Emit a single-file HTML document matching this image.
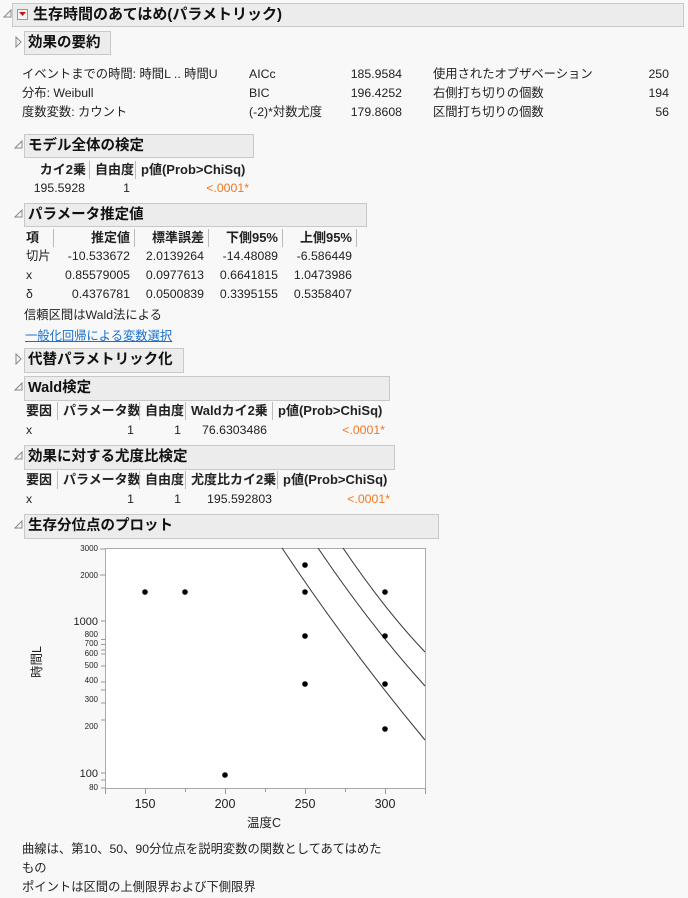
<!DOCTYPE html>
<html><head><meta charset="utf-8"><style>
body{margin:0;width:688px;height:898px;background:#f8f8f8;position:relative;overflow:hidden;font-family:"Liberation Sans","Noto Sans CJK JP",sans-serif;color:#222}
.t{position:absolute;white-space:nowrap;font-size:12.3px;line-height:14px}
.r{text-align:right}
.b{font-weight:bold;font-size:13px}
.o{color:#f07820}
.hd{position:absolute;background:#ececec;border:1px solid #c8c8c8;box-sizing:border-box;font-weight:bold;font-size:14.5px;line-height:22px;padding-left:3px;color:#111}
.sep{position:absolute;width:1px;background:#bbb}
</style></head><body>

<svg style="position:absolute;left:3px;top:9px" width="10" height="10"><path d="M8 1 L8 8 L1 8 Z" fill="none" stroke="#888" stroke-width="1"/></svg>
<div class="hd" style="left:12px;top:3px;width:672px;height:24px;font-size:15px;padding-left:20px">生存時間のあてはめ(パラメトリック)</div>
<div style="position:absolute;left:17px;top:9px;width:11px;height:11px;background:#f4f4f4;border:1px solid #999;box-sizing:border-box"></div>
<svg style="position:absolute;left:18px;top:11px" width="9" height="6"><path d="M1 1 L8 1 L4.5 5 Z" fill="#d01010"/></svg>

<svg style="position:absolute;left:15px;top:36px" width="8" height="12"><path d="M1 1 L6 6 L1 11 Z" fill="none" stroke="#888"/></svg>
<div class="hd" style="left:24px;top:31px;width:87px;height:24px">効果の要約</div>
<div class="t" style="left:22px;top:67px">イベントまでの時間: 時間L .. 時間U</div>
<div class="t" style="left:22px;top:86px">分布: Weibull</div>
<div class="t" style="left:22px;top:105px">度数変数: カウント</div>
<div class="t" style="left:249px;top:67px">AICc</div>
<div class="t" style="left:249px;top:86px">BIC</div>
<div class="t" style="left:249px;top:105px">(-2)*対数尤度</div>
<div class="t r" style="left:330px;width:72px;top:67px">185.9584</div>
<div class="t r" style="left:330px;width:72px;top:86px">196.4252</div>
<div class="t r" style="left:330px;width:72px;top:105px">179.8608</div>
<div class="t" style="left:433px;top:67px">使用されたオブザベーション</div>
<div class="t" style="left:433px;top:86px">右側打ち切りの個数</div>
<div class="t" style="left:433px;top:105px">区間打ち切りの個数</div>
<div class="t r" style="left:620px;width:49px;top:67px">250</div>
<div class="t r" style="left:620px;width:49px;top:86px">194</div>
<div class="t r" style="left:620px;width:49px;top:105px">56</div>

<svg style="position:absolute;left:14px;top:140px" width="10" height="10"><path d="M8 1 L8 8 L1 8 Z" fill="none" stroke="#888"/></svg>
<div class="hd" style="left:24px;top:134px;width:230px;height:24px">モデル全体の検定</div>
<div class="t b r" style="left:26px;width:60px;top:163px">カイ2乗</div>
<div class="sep" style="left:89px;top:161px;height:18px"></div>
<div class="t b" style="left:95px;top:163px">自由度</div>
<div class="sep" style="left:135px;top:161px;height:18px"></div>
<div class="t b" style="left:141px;top:163px">p値(Prob&gt;ChiSq)</div>
<div class="t r" style="left:20px;width:65px;top:181px">195.5928</div>
<div class="t r" style="left:100px;width:30px;top:181px">1</div>
<div class="t r o" style="left:180px;width:69px;top:181px">&lt;.0001*</div>

<svg style="position:absolute;left:14px;top:209px" width="10" height="10"><path d="M8 1 L8 8 L1 8 Z" fill="none" stroke="#888"/></svg>
<div class="hd" style="left:24px;top:203px;width:343px;height:24px">パラメータ推定値</div>
<div class="t b" style="left:26px;top:231px">項</div>
<div class="sep" style="left:53px;top:229px;height:18px"></div>
<div class="t b r" style="left:56px;width:74px;top:231px">推定値</div>
<div class="sep" style="left:134px;top:229px;height:18px"></div>
<div class="t b r" style="left:136px;width:68px;top:231px">標準誤差</div>
<div class="sep" style="left:208px;top:229px;height:18px"></div>
<div class="t b r" style="left:210px;width:68px;top:231px">下側95%</div>
<div class="sep" style="left:282px;top:229px;height:18px"></div>
<div class="t b r" style="left:284px;width:68px;top:231px">上側95%</div>
<div class="sep" style="left:356px;top:229px;height:18px"></div>
<div class="t" style="left:26px;top:249px">切片</div>
<div class="t" style="left:26px;top:268px">x</div>
<div class="t" style="left:26px;top:287px">δ</div>
<div class="t r" style="left:56px;width:74px;top:249px">-10.533672</div>
<div class="t r" style="left:56px;width:74px;top:268px">0.85579005</div>
<div class="t r" style="left:56px;width:74px;top:287px">0.4376781</div>
<div class="t r" style="left:136px;width:68px;top:249px">2.0139264</div>
<div class="t r" style="left:136px;width:68px;top:268px">0.0977613</div>
<div class="t r" style="left:136px;width:68px;top:287px">0.0500839</div>
<div class="t r" style="left:210px;width:68px;top:249px">-14.48089</div>
<div class="t r" style="left:210px;width:68px;top:268px">0.6641815</div>
<div class="t r" style="left:210px;width:68px;top:287px">0.3395155</div>
<div class="t r" style="left:284px;width:68px;top:249px">-6.586449</div>
<div class="t r" style="left:284px;width:68px;top:268px">1.0473986</div>
<div class="t r" style="left:284px;width:68px;top:287px">0.5358407</div>
<div class="t" style="left:24px;top:308px">信頼区間はWald法による</div>
<div class="t" style="left:25px;top:329px;color:#1a6fd0;text-decoration:underline">一般化回帰による変数選択</div>

<svg style="position:absolute;left:15px;top:353px" width="8" height="12"><path d="M1 1 L6 6 L1 11 Z" fill="none" stroke="#888"/></svg>
<div class="hd" style="left:24px;top:348px;width:160px;height:25px">代替パラメトリック化</div>

<svg style="position:absolute;left:14px;top:382px" width="10" height="10"><path d="M8 1 L8 8 L1 8 Z" fill="none" stroke="#888"/></svg>
<div class="hd" style="left:24px;top:376px;width:366px;height:25px">Wald検定</div>
<div class="t b" style="left:26px;top:404px">要因</div>
<div class="sep" style="left:57px;top:402px;height:18px"></div>
<div class="t b" style="left:63px;top:404px">パラメータ数</div>
<div class="sep" style="left:139px;top:402px;height:18px"></div>
<div class="t b" style="left:145px;top:404px">自由度</div>
<div class="sep" style="left:185px;top:402px;height:18px"></div>
<div class="t b" style="left:191px;top:404px">Waldカイ2乗</div>
<div class="sep" style="left:272px;top:402px;height:18px"></div>
<div class="t b" style="left:278px;top:404px">p値(Prob&gt;ChiSq)</div>
<div class="t" style="left:26px;top:423px">x</div>
<div class="t r" style="left:100px;width:34px;top:423px">1</div>
<div class="t r" style="left:150px;width:31px;top:423px">1</div>
<div class="t r" style="left:190px;width:77px;top:423px">76.6303486</div>
<div class="t r o" style="left:300px;width:85px;top:423px">&lt;.0001*</div>

<svg style="position:absolute;left:14px;top:451px" width="10" height="10"><path d="M8 1 L8 8 L1 8 Z" fill="none" stroke="#888"/></svg>
<div class="hd" style="left:24px;top:445px;width:371px;height:25px">効果に対する尤度比検定</div>
<div class="t b" style="left:26px;top:473px">要因</div>
<div class="sep" style="left:57px;top:471px;height:18px"></div>
<div class="t b" style="left:63px;top:473px">パラメータ数</div>
<div class="sep" style="left:139px;top:471px;height:18px"></div>
<div class="t b" style="left:145px;top:473px">自由度</div>
<div class="sep" style="left:185px;top:471px;height:18px"></div>
<div class="t b" style="left:191px;top:473px">尤度比カイ2乗</div>
<div class="sep" style="left:277px;top:471px;height:18px"></div>
<div class="t b" style="left:283px;top:473px">p値(Prob&gt;ChiSq)</div>
<div class="t" style="left:26px;top:492px">x</div>
<div class="t r" style="left:100px;width:34px;top:492px">1</div>
<div class="t r" style="left:150px;width:31px;top:492px">1</div>
<div class="t r" style="left:190px;width:82px;top:492px">195.592803</div>
<div class="t r o" style="left:300px;width:90px;top:492px">&lt;.0001*</div>

<svg style="position:absolute;left:14px;top:520px" width="10" height="10"><path d="M8 1 L8 8 L1 8 Z" fill="none" stroke="#888"/></svg>
<div class="hd" style="left:24px;top:514px;width:415px;height:25px">生存分位点のプロット</div>

<svg style="position:absolute;left:0;top:0" width="688" height="898">
<rect x="105.5" y="548.5" width="320" height="240" fill="#fff" stroke="#aaa"/>
<g stroke="#999" stroke-width="1">
<path d="M105 549h-5M105 575h-5M105 621h-4M105 639.5h-4M105 644.5h-4M105 650h-4M105 654h-4M105 666h-4M105 682h-4M105 690h-4M105 703h-4M105 720h-4M105 773h-4M105 780h-4M105 788h-4"/>
<path d="M105.5 788v6M145.5 788v6M185.5 788v4M225.5 788v6M265.5 788v4M305.5 788v6M345.5 788v4M385.5 788v6M425.5 788v6"/>
</g>
<g font-family="Liberation Sans,sans-serif" fill="#222" text-anchor="end">
<text x="98" y="551" font-size="8">3000</text>
<text x="98" y="578" font-size="8">2000</text>
<text x="98" y="625" font-size="11">1000</text>
<text x="98" y="637" font-size="8">800</text>
<text x="98" y="646" font-size="8">700</text>
<text x="98" y="656" font-size="8">600</text>
<text x="98" y="668" font-size="8">500</text>
<text x="98" y="683" font-size="8">400</text>
<text x="98" y="702" font-size="8">300</text>
<text x="98" y="729" font-size="8">200</text>
<text x="98" y="777" font-size="11">100</text>
<text x="98" y="790" font-size="8">80</text>
</g>
<g font-family="Liberation Sans,sans-serif" font-size="12.5" fill="#222" text-anchor="middle">
<text x="145" y="808">150</text><text x="225" y="808">200</text><text x="305" y="808">250</text><text x="385" y="808">300</text>
<text x="264" y="827" font-family="Liberation Sans,Noto Sans CJK JP,sans-serif">温度C</text>
<text transform="translate(41,662) rotate(-90)" font-family="Liberation Sans,Noto Sans CJK JP,sans-serif">時間L</text>
</g>
<g fill="none" stroke="#333" stroke-width="1">
<path d="M282 548 Q350 650 425 740"/>
<path d="M318 548 Q370 625 425 686"/>
<path d="M343 548 Q385 610 425 652"/>
</g>
<g fill="#000">
<circle cx="145" cy="592" r="2.8"/><circle cx="185" cy="592" r="2.8"/>
<circle cx="305" cy="565" r="2.8"/><circle cx="305" cy="592" r="2.8"/><circle cx="305" cy="636" r="2.8"/><circle cx="305" cy="684" r="2.8"/>
<circle cx="385" cy="592" r="2.8"/><circle cx="385" cy="636" r="2.8"/><circle cx="385" cy="684" r="2.8"/><circle cx="385" cy="729" r="2.8"/>
<circle cx="225" cy="775" r="2.8"/>
</g>
</svg>

<div class="t" style="left:22px;top:842px">曲線は、第10、50、90分位点を説明変数の関数としてあてはめた</div>
<div class="t" style="left:22px;top:861px">もの</div>
<div class="t" style="left:22px;top:880px">ポイントは区間の上側限界および下側限界</div>
</body></html>
